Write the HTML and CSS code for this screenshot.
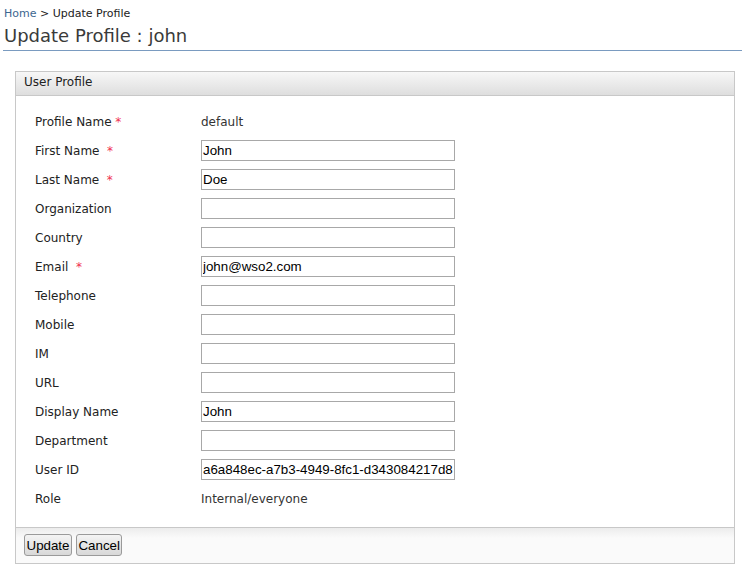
FILE: index.html
```html
<!DOCTYPE html>
<html>
<head>
<meta charset="utf-8">
<link rel="stylesheet" href="styles.css">
</head>
<body>
<div class="breadcrumb"><a class="crumb-link" href="#">Home</a> &gt; Update Profile</div>
<h2 class="page-title">Update Profile : john</h2>
<div class="panel">
  <div class="panel-head">User Profile</div>
  <div class="panel-body">
    <table class="form-table">
      <tr><td class="lbl">Profile Name <span class="req">*</span></td><td class="val">default</td></tr>
      <tr><td class="lbl">First Name &nbsp;<span class="req">*</span></td><td class="val"><input class="field" type="text" value="John"></td></tr>
      <tr><td class="lbl">Last Name &nbsp;<span class="req">*</span></td><td class="val"><input class="field" type="text" value="Doe"></td></tr>
      <tr><td class="lbl">Organization</td><td class="val"><input class="field" type="text" value=""></td></tr>
      <tr><td class="lbl">Country</td><td class="val"><input class="field" type="text" value=""></td></tr>
      <tr><td class="lbl">Email &nbsp;<span class="req">*</span></td><td class="val"><input class="field" type="text" value="john@wso2.com"></td></tr>
      <tr><td class="lbl">Telephone</td><td class="val"><input class="field" type="text" value=""></td></tr>
      <tr><td class="lbl">Mobile</td><td class="val"><input class="field" type="text" value=""></td></tr>
      <tr><td class="lbl">IM</td><td class="val"><input class="field" type="text" value=""></td></tr>
      <tr><td class="lbl">URL</td><td class="val"><input class="field" type="text" value=""></td></tr>
      <tr><td class="lbl">Display Name</td><td class="val"><input class="field" type="text" value="John"></td></tr>
      <tr><td class="lbl">Department</td><td class="val"><input class="field" type="text" value=""></td></tr>
      <tr><td class="lbl">User ID</td><td class="val"><input class="field" type="text" value="a6a848ec-a7b3-4949-8fc1-d343084217d8"></td></tr>
      <tr><td class="lbl">Role</td><td class="val">Internal/everyone</td></tr>
    </table>
  </div>
  <div class="panel-foot">
    <button class="btn" type="button">Update</button>
    <button class="btn" type="button">Cancel</button>
  </div>
</div>
</body>
</html>
```
FILE: styles.css
```css
html, body {
  margin: 0;
  padding: 0;
  background: #fff;
}
body {
  font-family: "DejaVu Sans", Verdana, sans-serif;
  color: #222;
}
.breadcrumb {
  font-size: 11px;
  line-height: 13px;
  padding: 7px 0 0 4px;
  color: #222;
}
.crumb-link {
  color: #3d6690;
  text-decoration: none;
}
.page-title {
  font-size: 18px;
  font-weight: normal;
  color: #3a3a3a;
  margin: 6px 9px 0 3px;
  padding: 0 0 4px 1px;
  line-height: 20px;
  border-bottom: 1px solid #7a9bc0;
}
.panel {
  margin: 20px 0 0 15px;
  width: 718px;
  border: 1px solid #c8c8c8;
}
.panel-head {
  height: 23px;
  line-height: 21px;
  padding-left: 8px;
  font-size: 12px;
  color: #222;
  background: linear-gradient(#f7f7f7, #dedede);
  border-bottom: 1px solid #c8c8c8;
}
.panel-body {
  padding: 11px 0 14px 19px;
}
.form-table {
  border-collapse: collapse;
}
.form-table tr {
  height: 29px;
}
.form-table td {
  padding: 0;
  vertical-align: middle;
  font-size: 12px;
}
.lbl {
  width: 166px;
  color: #222;
}
.req {
  color: #f03050;
}
.val {
  color: #333;
}
.field {
  box-sizing: border-box;
  width: 254px;
  height: 21px;
  margin: 0;
  padding: 0 1px;
  border: 1px solid #a8a8a8;
  font-family: "Liberation Sans", Arial, sans-serif;
  font-size: 13.33px;
  color: #000;
}
.panel-foot {
  border-top: 1px solid #c8c8c8;
  background: linear-gradient(#ececec, #fafafa 10px, #fafafa);
  padding: 6px 0 7px 8px;
  display: flex;
  gap: 4px;
}
.btn {
  font-family: "Liberation Sans", Arial, sans-serif;
  font-size: 13.33px;
  color: #000;
  height: 22px;
  padding: 0 1.5px;
  border: 1px solid #9a9a9a;
  border-radius: 3px;
  background: linear-gradient(#f4f4f4, #d8d8d8);
}
```
